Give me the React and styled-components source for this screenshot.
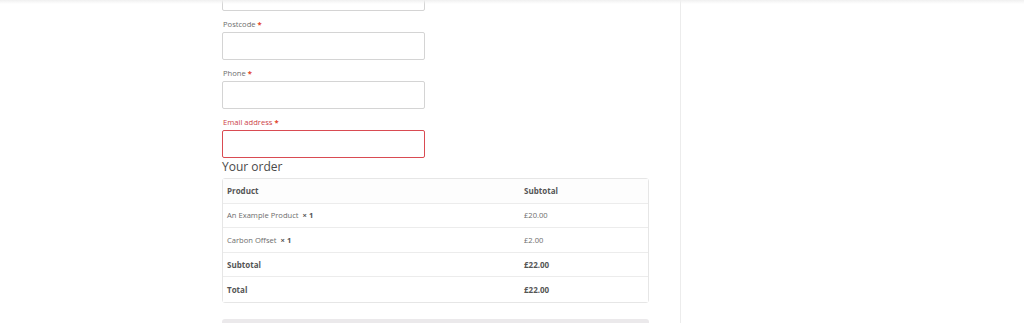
import styled, { createGlobalStyle } from "styled-components";

const GlobalStyle = createGlobalStyle`
  html, body {
    margin: 0;
    padding: 0;
    background: #ffffff;
  }
  body {
    font-family: "Open Sans", "Liberation Sans", sans-serif;
    color: #6d6d6d;
  }
`;

const fields = [
  { id: "postcode", label: "Postcode" },
  { id: "phone", label: "Phone" },
  { id: "email", label: "Email address", invalid: true },
];

const lines = [
  { name: "An Example Product", qty: 1, price: "£20.00" },
  { name: "Carbon Offset", qty: 1, price: "£2.00" },
];

const App = () => {
  return (
    <Page>
      <GlobalStyle />
      <TopShade />
      <Layout>
        <Main>
          <Form>
            <CutInput />
            {fields.map((f) => (
              <Field key={f.id}>
                <Label invalid={f.invalid}>
                  {f.label} <Req>*</Req>
                </Label>
                <Input invalid={f.invalid} />
              </Field>
            ))}
          </Form>
          <Heading>Your order</Heading>
          <Table>
            <Row head>
              <Cell head>Product</Cell>
              <Cell head>Subtotal</Cell>
            </Row>
            {lines.map((l) => (
              <Row key={l.name}>
                <Cell>
                  {l.name} <Qty>× {l.qty}</Qty>
                </Cell>
                <Cell>{l.price}</Cell>
              </Row>
            ))}
            <Row>
              <Cell head>Subtotal</Cell>
              <Cell head>£22.00</Cell>
            </Row>
            <Row last>
              <Cell head>Total</Cell>
              <Cell head>£22.00</Cell>
            </Row>
          </Table>
          <Payment />
        </Main>
        <Sidebar />
      </Layout>
    </Page>
  );
};

export default App;

const Page = styled.div`
  position: relative;
  width: 1024px;
  height: 323px;
  overflow: hidden;
`;

const TopShade = styled.div`
  position: absolute;
  top: 0;
  left: 0;
  right: 0;
  height: 4px;
  background: linear-gradient(#f0f0f0, rgba(255, 255, 255, 0));
`;

const Layout = styled.div`
  display: flex;
  height: 100%;
`;

const Main = styled.div`
  margin-left: 222px;
  width: 427px;
  display: flex;
  flex-direction: column;
`;

const Sidebar = styled.div`
  margin-left: 31px;
  width: 1px;
  height: 100%;
  background: #ececec;
`;

const Form = styled.div`
  display: flex;
  flex-direction: column;
  width: 203px;
  margin-top: -17px;
`;

const CutInput = styled.div`
  height: 28px;
  box-sizing: border-box;
  border: 1px solid #d4d4d4;
  border-radius: 2px;
`;

const Field = styled.div`
  display: flex;
  flex-direction: column;
  margin-top: 7px;
`;

const Label = styled.label`
  font-size: 7.6px;
  line-height: 13px;
  margin-bottom: 1px;
  padding-left: 1px;
  color: ${({ invalid }) => (invalid ? "#cc3f47" : "#6d6d6d")};
`;

const Req = styled.span`
  color: #e2401c;
  font-weight: 700;
`;

const Input = styled.div`
  height: 28px;
  box-sizing: border-box;
  border: 1px solid ${({ invalid }) => (invalid ? "#d94b52" : "#d4d4d4")};
  border-radius: 2px;
  background: #ffffff;
`;

const Heading = styled.h3`
  margin: 0 0 2px;
  font-size: 12px;
  line-height: 18px;
  font-weight: 400;
  color: #4a4a4a;
`;

const Table = styled.div`
  border: 1px solid #e6e6e6;
  border-radius: 3px;
  display: flex;
  flex-direction: column;
`;

const Row = styled.div`
  display: grid;
  grid-template-columns: 297px 1fr;
  box-sizing: border-box;
  height: 24.6px;
  align-items: center;
  border-bottom: ${({ last }) => (last ? "none" : "1px solid #ececec")};
  background: ${({ head }) => (head ? "#fdfdfd" : "#ffffff")};
`;

const Cell = styled.div`
  padding-left: 4px;
  font-size: ${({ head }) => (head ? "8px" : "7.6px")};
  font-weight: ${({ head }) => (head ? 700 : 400)};
  color: ${({ head }) => (head ? "#555555" : "#6d6d6d")};
`;

const Qty = styled.strong`
  margin-left: 2px;
  color: #555555;
`;

const Payment = styled.div`
  margin-top: 16px;
  height: 20px;
  background: #ebe9eb;
  border-radius: 3px 3px 0 0;
`;
